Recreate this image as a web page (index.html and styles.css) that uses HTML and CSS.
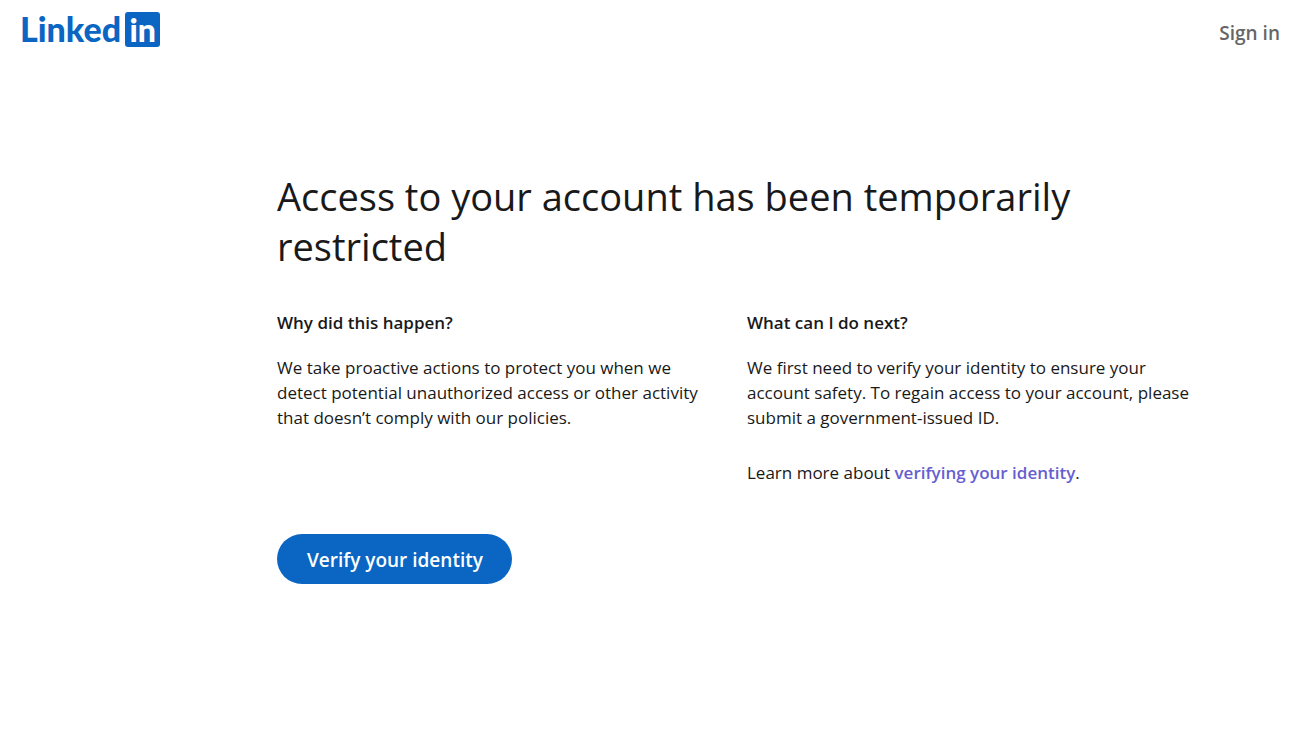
FILE: index.html
```html
<!DOCTYPE html>
<html lang="en">
<head>
<meta charset="utf-8">
<meta name="viewport" content="width=device-width, initial-scale=1">
<title>Account restricted | LinkedIn</title>
<link rel="stylesheet" href="styles.css">
</head>
<body>
<header class="site-header">
  <a class="logo" href="#" aria-label="LinkedIn">
    <span class="logo-word">Linked</span>
    <span class="logo-box">in</span>
  </a>
  <a class="sign-in" href="#">Sign in</a>
</header>
<main class="content">
  <h1 class="title">Access to your account has been temporarily restricted</h1>
  <div class="columns">
    <section>
      <h2 class="subtitle">Why did this happen?</h2>
      <p class="text">We take proactive actions to protect you when we detect potential unauthorized access or other activity that doesn’t comply with our policies.</p>
    </section>
    <section>
      <h2 class="subtitle">What can I do next?</h2>
      <p class="text">We first need to verify your identity to ensure your account safety. To regain access to your account, please submit a government-issued ID.</p>
      <p class="text">Learn more about <a class="link" href="#">verifying your identity</a>.</p>
    </section>
  </div>
  <button class="primary" type="button">Verify your identity</button>
</main>
</body>
</html>
```
FILE: styles.css
```css
* {
  box-sizing: border-box;
}

body {
  margin: 0;
  background: #fff;
  color: #191919;
  font-family: "Segoe UI", "Open Sans", "Noto Sans", sans-serif;
}

.site-header {
  display: flex;
  align-items: center;
  justify-content: space-between;
  padding: 12px 27px 0 20px;
}

.logo {
  display: flex;
  align-items: flex-start;
  gap: 4px;
  color: #0a66c2;
  font-family: Lato, sans-serif;
  font-size: 34px;
  font-weight: 900;
  line-height: 33px;
  text-decoration: none;
}

.logo-box {
  width: 35px;
  height: 35px;
  border-radius: 3px;
  background: #0a66c2;
  color: #fff;
  font-size: 32px;
  line-height: 35px;
  text-align: center;
}

.sign-in {
  padding-top: 6px;
  color: #666;
  font-size: 19px;
  font-weight: 600;
  line-height: 28px;
  text-decoration: none;
}

.content {
  max-width: 1207px;
  padding: 124px 0 48px 277px;
}

.title {
  margin: 0 0 39px;
  font-size: 38px;
  font-weight: 400;
  line-height: 50px;
}

.columns {
  display: grid;
  grid-template-columns: 44fr 46fr;
  gap: 30px;
}

.subtitle {
  margin: 0 0 20px;
  font-size: 17px;
  font-weight: 600;
  line-height: 25px;
}

.text {
  margin: 0 0 30px;
  font-size: 17px;
  line-height: 25px;
}

.link {
  color: #665ed0;
  font-weight: 600;
  text-decoration: none;
}

.primary {
  height: 50px;
  margin-top: 19px;
  padding: 3px 29px 0 30px;
  border: 0;
  border-radius: 25px;
  background: #0a66c2;
  color: #fff;
  font-family: inherit;
  font-size: 19px;
  font-weight: 600;
  line-height: 25px;
}
```
